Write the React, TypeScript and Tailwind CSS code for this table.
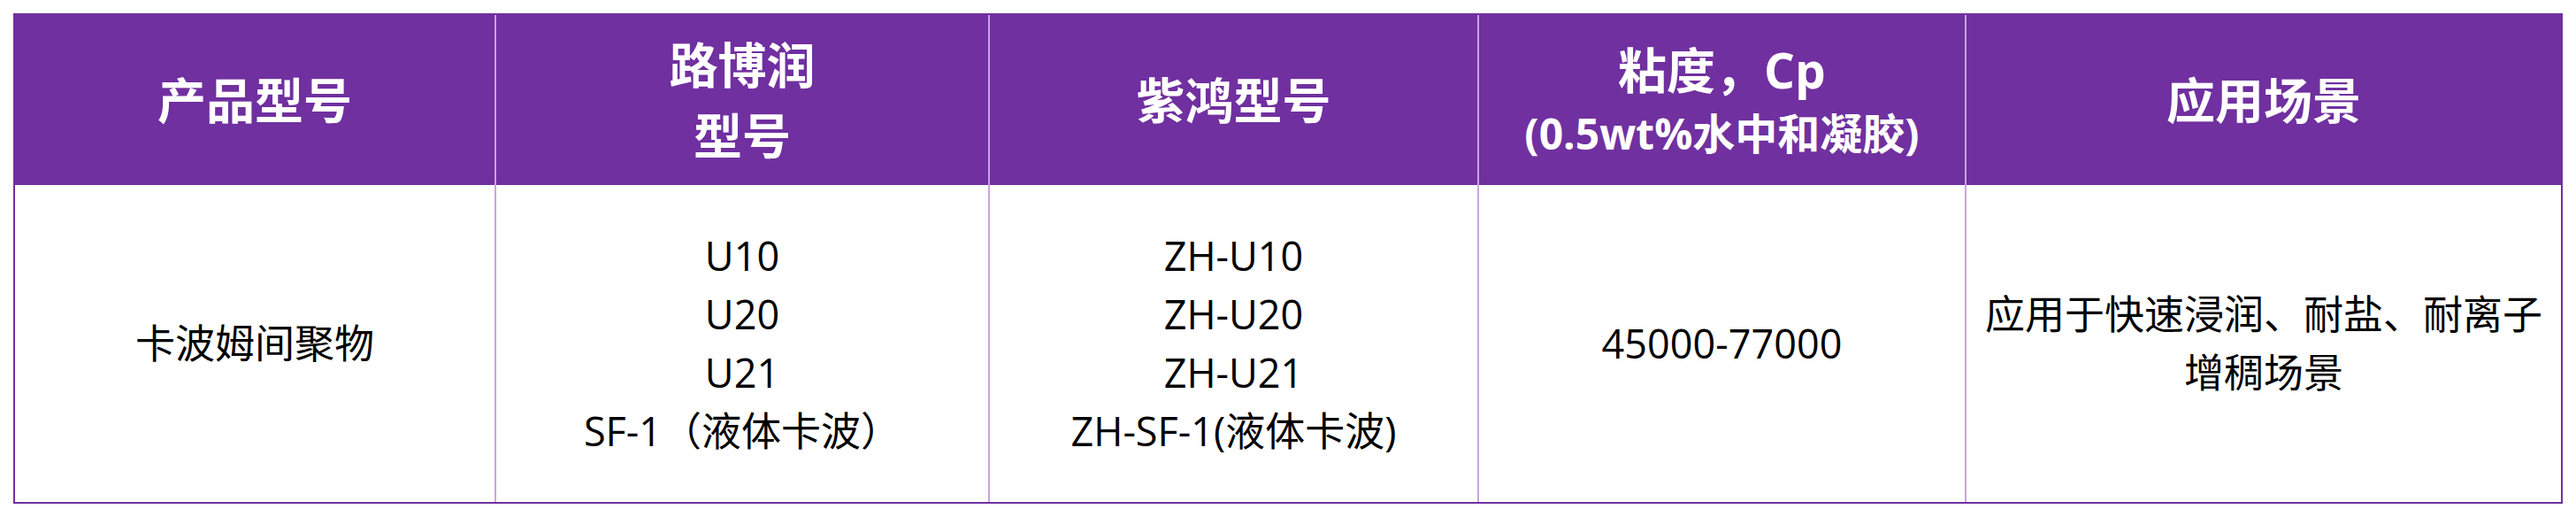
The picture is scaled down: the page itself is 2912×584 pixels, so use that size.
import React from "react";

const font = { fontFamily: '"Open Sans", "Noto Sans CJK SC", sans-serif' };

function HeadCell({ children, first }: { children: React.ReactNode; first?: boolean }) {
  return (
    <div
      className={
        "flex flex-col items-center justify-center text-center text-white font-bold " +
        (first ? "" : "border-l-2 border-[#c9a3e6]")
      }
    >
      {children}
    </div>
  );
}

function BodyCell({ children, first }: { children: React.ReactNode; first?: boolean }) {
  return (
    <div
      className={
        "flex flex-col items-center justify-center text-center text-black text-[45px] leading-[66px] " +
        (first ? "" : "border-l-2 border-[#c9a3e6]")
      }
    >
      {children}
    </div>
  );
}

export default function App() {
  return (
    <div className="w-[2912px] h-[584px] bg-white pt-[15px] pl-[15px]" style={font}>
      <div className="w-[2882px] h-[554px] border-2 border-[#7030a0] flex flex-col">
        <div className="h-[192px] bg-[#7030a0] grid grid-cols-[542px_558px_553px_551px_674px]">
          <HeadCell first>
            <div className="text-[55px] leading-[80px]">产品型号</div>
          </HeadCell>
          <HeadCell>
            <div className="text-[55px] leading-[80px]">路博润</div>
            <div className="text-[55px] leading-[80px]">型号</div>
          </HeadCell>
          <HeadCell>
            <div className="text-[55px] leading-[80px]">紫鸿型号</div>
          </HeadCell>
          <HeadCell>
            <div className="text-[55px] leading-[76px]">粘度，Cp</div>
            <div className="text-[48px] leading-[68px]">(0.5wt%水中和凝胶)</div>
          </HeadCell>
          <HeadCell>
            <div className="text-[55px] leading-[80px]">应用场景</div>
          </HeadCell>
        </div>
        <div className="flex-1 grid grid-cols-[542px_558px_553px_551px_674px]">
          <BodyCell first>
            <div>卡波姆间聚物</div>
          </BodyCell>
          <BodyCell>
            <div>U10</div>
            <div>U20</div>
            <div>U21</div>
            <div>SF-1（液体卡波）</div>
          </BodyCell>
          <BodyCell>
            <div>ZH-U10</div>
            <div>ZH-U20</div>
            <div>ZH-U21</div>
            <div>ZH-SF-1(液体卡波)</div>
          </BodyCell>
          <BodyCell>
            <div>45000-77000</div>
          </BodyCell>
          <BodyCell>
            <div>应用于快速浸润、耐盐、耐离子</div>
            <div>增稠场景</div>
          </BodyCell>
        </div>
      </div>
    </div>
  );
}
